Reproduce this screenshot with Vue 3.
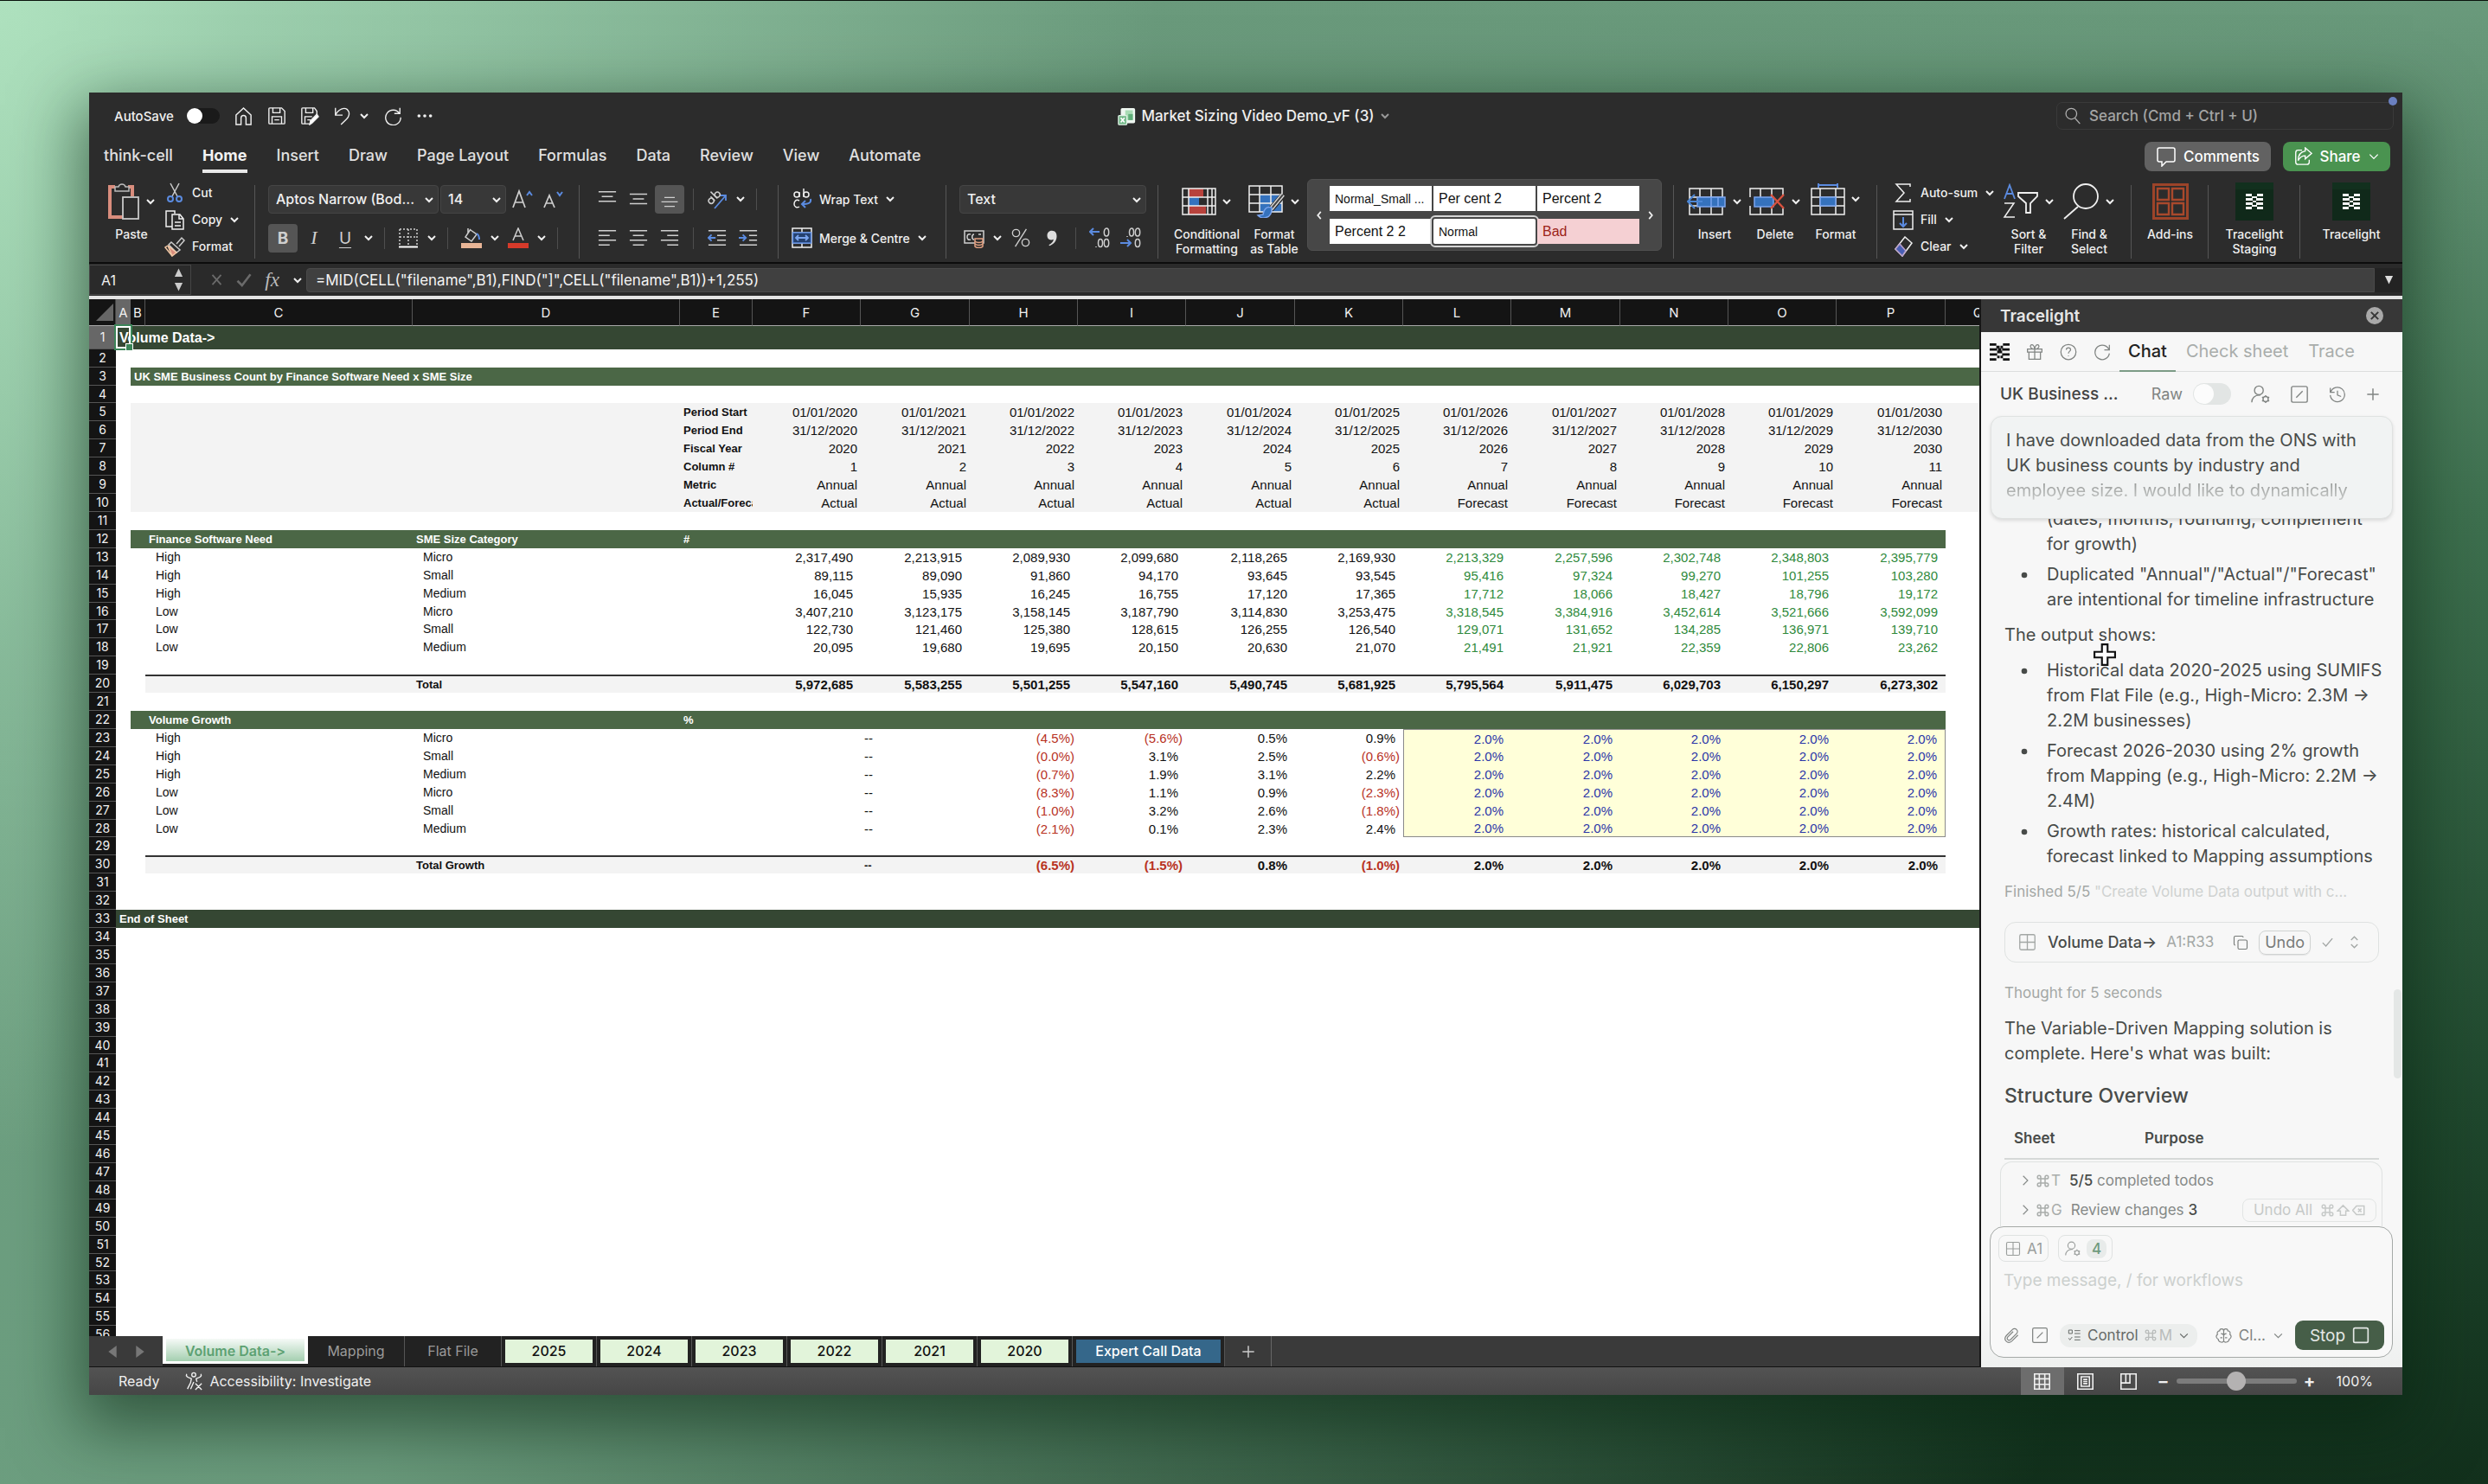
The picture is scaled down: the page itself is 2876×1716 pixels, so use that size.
<script setup>
import { h, ref } from 'vue'

const icons = {
  chev: '<path d="M4 8l8 8 8-8" stroke-width="4"/>',
  chevThin: '<path d="M4 8l8 8 8-8" stroke-width="2.200"/>',
  chevL: '<path d="M15 5l-6 7 6 7" stroke-width="3"/>',
  chevR: '<path d="M9 5l6 7-6 7" stroke-width="3"/>',
  chevRThin: '<path d="M8 3l9 9-9 9" stroke-width="2"/>',
  home: '<path d="M3 10.500L12 2l9 8.500V22h-6v-8a3 3 0 0 0-6 0v8H3z"/>',
  save: '<path d="M4 2h14l4 4v15a1 1 0 0 1-1 1H3a1 1 0 0 1-1-1V3a1 1 0 0 1 1-1zM7 2v6h9V2M6 22v-9h12v9M9 17h6"/>',
  saveEdit: '<path d="M12 22H3a1 1 0 0 1-1-1V3a1 1 0 0 1 1-1h15l3 4v4M7 2v6h9V2M6 22v-9h9M9 17h4"/><path d="M12 23l1-5 8-8 2 3-8 8z" fill="#fff"/>',
  undo: '<path d="M3 2v9h9M3 11C7 3 14 1 18 4c4 4 2 9-1 12l-7 7"/>',
  redo: '<path d="M21 2v7h-7M20.500 9A9.500 9.500 0 1 0 22 14"/>',
  dots: '<g fill="currentColor" stroke="none"><circle cx="4" cy="12" r="2.200"/><circle cx="12" cy="12" r="2.200"/><circle cx="20" cy="12" r="2.200"/></g>',
  excel: '<rect x="4" y="1" width="19" height="20" rx="2" fill="#eef6f0" stroke="none"/><rect x="10" y="4" width="10" height="13" fill="#a9dcb5" stroke="none"/><rect x="14" y="9" width="6" height="8" fill="#5fae78" stroke="none"/><rect x="1" y="11" width="11" height="12" rx="1" fill="#6fb786" stroke="#dff0e4"/><path d="M4 14l5 6M9 14l-5 6" stroke="#fff" stroke-width="2"/>',
  search: '<circle cx="10" cy="9" r="7.500"/><path d="M15 15l7 8"/>',
  bubble: '<path d="M4 2h16a2 2 0 0 1 2 2v12a2 2 0 0 1-2 2h-8l-5 5v-5H4a2 2 0 0 1-2-2V4a2 2 0 0 1 2-2z"/>',
  share: '<path d="M11 4H6a3 3 0 0 0-3 3v12a3 3 0 0 0 3 3h11a3 3 0 0 0 3-3v-3"/><path d="M15 1l8 7-8 7v-4c-5 0-7 2-9 6 0-7 3-11 9-12z"/>',
  paste: '<path d="M9 4H3v35h16" stroke="#d98d7d" stroke-width="4"/><path d="M24 4h5v11" stroke="#d98d7d" stroke-width="4"/><path d="M9 9V4h4c1-4 7-4 8 0h4v5z" stroke="#bbb" fill="#2c2c2c" stroke-width="1.500"/><rect x="18" y="16" width="18" height="25" stroke="#c8c8c8" fill="#2c2c2c" stroke-width="1.800"/>',
  cut: '<path d="M7 1l8 15M17 1L9 16" stroke="#ccc"/><circle cx="7" cy="19" r="3" stroke="#5b8be0" stroke-width="2"/><circle cx="17" cy="19" r="3" stroke="#5b8be0" stroke-width="2"/>',
  copy: '<path d="M9 20H2V2h10v3M9 6h9l4 5v12H9zM17 6v5h5M12 15h7M12 19h7"/>',
  brush: '<path d="M14 9l6-7 3 3-6 7" stroke="#ccc"/><path d="M8 7l10 9-4 3L5 10z" stroke="#ccc"/><path d="M4 11l10 8-5 4z" fill="#d98d7d" stroke="#f1c7a5"/><path d="M4 11l-3 2 8 10" stroke="#f1c7a5"/>',
  bigA: '<path d="M1 22L8 3l7 19M4 16h8" stroke-width="1.700"/><path d="M17 8l3-4 3 4" stroke="#5b8be0" stroke-width="2"/>',
  smallA: '<path d="M1 22L7 8l6 14M3 17h8" stroke-width="1.700"/><path d="M16 4l3 4 3-4" stroke="#5b8be0" stroke-width="2"/>',
  border: '<path d="M2 2h20M2 2v18M22 2v18M12 2v18M2 11h20" stroke-dasharray="2 2"/><path d="M1 22.500h22" stroke-width="2" stroke="#fff"/>',
  fill: '<path d="M11 2L5 11l7 5 6-8-7-5M8 1v6"/><path d="M18 7c3 2 3 5 3 7" stroke="#5b8be0" stroke-width="2"/><rect x="0" y="18" width="24" height="6" fill="#e8b596" stroke="none"/>',
  fontColor: '<path d="M6 15L12 1l6 14M8 10h8"/><rect x="0" y="18" width="24" height="6" fill="#d63a2a" stroke="none"/>',
  alTop: '<path d="M1 3h22M5 9h14M1 15h22"/>',
  alMid: '<path d="M1 6h22M5 12h14M1 18h22"/>',
  alBot: '<path d="M5 12h14M1 18h22M5 24h14"/>',
  alL: '<path d="M1 3h22M1 9h14M1 15h22M1 21h14"/>',
  alC: '<path d="M1 3h22M5 9h14M1 15h22M5 21h14"/>',
  alR: '<path d="M1 3h22M9 9h14M1 15h22M9 21h14"/>',
  orient: '<g transform="rotate(-45 8 10)"><circle cx="3" cy="11" r="3"/><path d="M6 7v7M10 3v11"/><circle cx="13" cy="11" r="3"/></g><path d="M9 23L22 8M16 8h6v6" stroke="#5b8be0" stroke-width="1.800"/>',
  outdent: '<path d="M1 3h22M12 9h11M12 15h11M1 21h22"/><path d="M10 12H1M5 8l-4 4 4 4" stroke="#5b8be0" stroke-width="2"/>',
  indent: '<path d="M1 3h22M13 9h10M13 15h10M1 21h22"/><path d="M0 12h9M5 8l4 4-4 4" stroke="#5b8be0" stroke-width="2"/>',
  wrap: '<circle cx="6" cy="7" r="3"/><path d="M9 4v6M14 0v10"/><circle cx="17" cy="7" r="3"/><path d="M9 14c-4-2-6 1-6 4s3 5 6 3"/><path d="M22 12c1 5-3 6-10 6M16 14l-4 4 4 4" stroke="#5b8be0" stroke-width="2"/>',
  merge: '<path d="M1 1h22v22H1zM12 1v5M12 18v5M1 6h22M1 18h22"/><rect x="1.500" y="6" width="21" height="12" fill="#24406e" stroke="#5b8be0"/><path d="M5 12h14M8 9l-3 3 3 3M16 9l3 3-3 3" stroke="#7aa4ee" stroke-width="1.800"/>',
  money: '<path d="M1 4h22v14H1z"/><path d="M8 8c-3-1-4 1-4 3s1 4 4 3M12 8c-3 0-3 6 0 6M17 8h3"/><path d="M13 13h9v9c-2 2-7 2-9 0z" fill="#2c2c2c" stroke="#e2a183"/><path d="M13 16c2 2 7 2 9 0M13 19c2 2 7 2 9 0" stroke="#e2a183"/>',
  percent: '<circle cx="6" cy="6" r="4.500"/><circle cx="18" cy="18" r="4.500"/><path d="M19 1L5 23"/>',
  comma: '<path d="M12 3c4 0 6 3 6 7 0 6-4 10-9 12l-1-1c4-2 6-5 6-7-5 2-8-1-8-5 0-3 2-6 6-6z" fill="#ddd" stroke="none"/>',
  decInc: '<path d="M12 5H1M5 1L1 5l4 4" stroke="#5b8be0" stroke-width="2"/><ellipse cx="20" cy="5.500" rx="2.700" ry="4.500"/><ellipse cx="13" cy="18" rx="2.500" ry="4.500"/><ellipse cx="20" cy="18" rx="2.700" ry="4.500"/><path d="M8 22v1"/>',
  decDec: '<ellipse cx="13" cy="5.500" rx="2.500" ry="4.500"/><ellipse cx="20" cy="5.500" rx="2.700" ry="4.500"/><path d="M8 10v1"/><path d="M0 18h12M8 14l4 4-4 4" stroke="#5b8be0" stroke-width="2"/><ellipse cx="20" cy="18" rx="2.700" ry="4.500"/>',
  cond: '<rect x="8" y="1" width="17" height="10" fill="#b8423c" stroke="none"/><rect x="8" y="11" width="12" height="10" fill="#3572bd" stroke="none"/><rect x="8" y="21" width="20" height="10" fill="#b8423c" stroke="none"/><path d="M1 1h38v30H1zM1 11h38M1 21h38M8 1v30M30 1v30M35 1v30"/>',
  fmtTable: '<rect x="13" y="11" width="26" height="20" fill="#3572bd" stroke="none"/><path d="M1 1h38v30H1zM1 11h38M1 21h38M13 1v30M26 1v30"/><path d="M40 12L26 28" stroke="#2c2c2c" stroke-width="7"/><path d="M40 11L26 28" stroke="#ddd" stroke-width="5"/><path d="M40 11L26 28" stroke="#444" stroke-width="2"/><path d="M27 26c-6-2-9 2-10 8l-6 1c5 5 17 4 16-9z" fill="#3572bd" stroke="#7aa4ee"/>',
  insCells: '<path d="M3 1h38v30H3zM15 1v30M28 1v30M3 11h38M3 21h38"/><rect x="12" y="11" width="32" height="11" fill="#3572bd" stroke="#7aa4ee"/><path d="M28 11v11M36 11v11" stroke="#7aa4ee"/><path d="M18 16H1M9 8l-8 8 8 8" stroke="#4c86d4" stroke-width="2"/>',
  delCells: '<path d="M1 11V1h38v8M39 24v7H1V21M13 1v30M26 1v30"/><rect x="6" y="11" width="22" height="11" fill="#3572bd" stroke="#7aa4ee"/><path d="M25 8l15 16M40 8L25 24" stroke="#d9523f" stroke-width="2.400"/>',
  fmtCells: '<path d="M1 7h38v30H1zM1 17h38M1 27h38M11 7v30M29 7v30"/><rect x="11" y="17" width="18" height="10" fill="#3572bd" stroke="#7aa4ee"/><path d="M9 3h22M9 1v5M31 1v5" stroke="#5b8be0" stroke-width="2"/>',
  sigma: '<path d="M20 5V2H4l9 10-9 10h16v-3"/>',
  fillDown: '<path d="M1 2h22v21H1zM1 6h22"/><path d="M12 9v11M8 16l4 4 4-4" stroke="#5b8be0" stroke-width="2"/>',
  clear: '<path d="M3 15L14 1l8 7L11 23z"/><path d="M3 15l8 8 4-6-7-8z" fill="#4a5fb5" stroke="#b9a0c8"/>',
  sort: '<path d="M2 18L8 2l6 16M4 12h8" stroke="#5b8be0" stroke-width="1.800"/><path d="M2 23h11L2 39h12"/><path d="M18 11h22v4l-8 8v11h-5V23l-9-8z" stroke-width="1.800"/>',
  find: '<circle cx="26" cy="15" r="14" stroke-width="1.800"/><path d="M17 27L1 41" stroke-width="1.800"/>',
  addins: '<rect x="1.500" y="1.500" width="39" height="39" stroke="#9c4429" stroke-width="3"/><path d="M6 6h13v13H6zM23 6h13v13H23zM6 23h13v13H6zM23 23h13v13H23z" stroke="#a9492c" stroke-width="2.400"/>',
  tl: '<rect width="44" height="44" fill="#12301e" stroke="none"/><rect y="8" width="44" height="36" fill="#10291a" stroke="none"/><g fill="#f4f4f4" stroke="none"><path d="M12 13h7v3h-7zM25 13h7v3h-7zM12 18h8v3h-8zM24 18h8v3h-8zM12 23h8v3h-8zM24 23h8v3h-8zM12 28h7v3h-7zM25 28h7v3h-7zM19 16h3v2h-3zM22 16h3v2h-3zM20 21h4v2h-4zM19 26h6v2h-6z"/></g>',
  logo: '<g fill="#111" stroke="none"><path d="M0 2h8v3H0zM16 2h8v3h-8zM8 5h4v3H8zM13 5h3v3h-3zM0 8h9v3H0zM15 8h9v3h-9zM10 8h4v3h-4zM9 11h6v3H9zM0 14h9v3H0zM15 14h9v3h-9zM9 17h3v3H9zM13 17h3v3h-3zM0 20h8v3H0zM16 20h8v3h-8z"/></g>',
  cross: '<path d="M4 3l16 18M20 3L4 21" stroke-width="3"/>',
  tick: '<path d="M2 13l7 7L22 3" stroke-width="3.500"/>',
  triUp: '<path d="M12 1l10 21H2z" fill="currentColor" stroke="none"/>',
  triDown: '<path d="M12 23L2 2h20z" fill="currentColor" stroke="none"/>',
  triL: '<path d="M4 12L20 0v24z" fill="currentColor" stroke="none"/>',
  triR: '<path d="M20 12L4 0v24z" fill="currentColor" stroke="none"/>',
  corner: '<path d="M24 0v24H0z" fill="#666" stroke="none"/>',
  gift: '<path d="M2 8h20v4H2zM4 12v10h16V12M12 8v14M12 8C5 8 5 2 8 2s4 6 4 6 1-6 4-6 3 6-4 6z"/>',
  help: '<circle cx="12" cy="12" r="10.500"/><path d="M9 9c0-4 6-4 6 0 0 2-3 2-3 5M12 17v1"/>',
  refresh: '<path d="M22 2v7h-7M21.500 9A10 10 0 1 0 22 14"/>',
  userCog: '<circle cx="10" cy="7" r="5.500"/><path d="M1 22c0-5 4-9 9-9h2"/><circle cx="18.500" cy="18" r="3.300"/><path d="M18.500 13v2M18.500 21v2M14 15.500l2 1M21 19.500l2 1M14 20.500l2-1M21 16.500l2-1" />',
  slashBox: '<rect x="2" y="2" width="20" height="20" rx="2"/><path d="M8 16l8-8"/>',
  history: '<path d="M2 3v6h6M2.500 9A10 10 0 1 1 2 13M12 7v6l5 2"/>',
  plus: '<path d="M12 2v20M2 12h20"/>',
  closeDot: '<circle cx="12" cy="12" r="12" fill="#a9a9a9" stroke="none"/><path d="M7 7l10 10M17 7L7 17" stroke="#373737" stroke-width="2.400"/>',
  grid4: '<rect x="2" y="2" width="20" height="20" rx="2"/><path d="M12 2v20M2 12h20"/>',
  dup: '<rect x="8" y="8" width="14" height="14" rx="2"/><path d="M4 16a2 2 0 0 1-2-2V4a2 2 0 0 1 2-2h10a2 2 0 0 1 2 2"/>',
  check: '<path d="M3 13l6 6L21 5"/>',
  updown: '<path d="M6 8l6-6 6 6M6 16l6 6 6-6"/>',
  clip: '<path d="M21 11l-9 9c-6 5-13-2-8-8l9-9c4-4 10 2 6 6l-9 9c-3 2-6-1-4-4l8-8"/>',
  tasks: '<path d="M2 3h6v6H2zM2 17l2 3 4-5M12 4h10M12 9h10M12 15h10M12 20h10"/>',
  brain: '<path d="M12 3v18M12 5c0-4-6-4-6 0-3 0-4 3-3 5-3 2-2 6 1 7 0 4 6 6 8 3M12 5c0-4 6-4 6 0 3 0 4 3 3 5 3 2 2 6-1 7 0 4-6 6-8 3M8 9c2 0 4 1 4 3M16 9c-2 0-4 1-4 3M7 15h3M17 15h-3"/>',
  square: '<rect x="2" y="2" width="20" height="20" rx="2" stroke-width="2"/>',
  cmd: '<path d="M8 8h8v8H8zM8 8H5a3 3 0 1 1 3-3zM16 8h3a3 3 0 1 0-3-3zM8 16H5a3 3 0 1 0 3 3zM16 16h3a3 3 0 1 1-3 3z" stroke-width="2.400"/>',
  shift: '<path d="M12 3L2 13h5v8h10v-8h5z" stroke-width="2.400"/>',
  back: '<path d="M8 4h14v16H8l-7-8zM11 9l6 6M17 9l-6 6" stroke-width="2.400"/>',
  access: '<circle cx="12" cy="4" r="2.500"/><path d="M3 3c-2 4 4 5 6 6l-1 5-4 8M21 3c2 4-4 5-6 6l1 4M12 13l-4 9M14 15l8 8M22 15l-8 8"/>',
  vNormal: '<path d="M1 1h22v22H1zM8 1v22M16 1v22M1 8h22M1 16h22" stroke-width="2"/>',
  vPage: '<path d="M1 1h22v22H1zM6 5h12v14H6zM9 9h6M9 12h6M9 15h6" stroke-width="2"/>',
  vBreak: '<path d="M1 1h22v22H1zM1 14h13V1M8 1v13" stroke-width="2"/>',
  bullet: '<circle cx="12" cy="12" r="10" fill="currentColor" stroke="none"/>',
  pointer: '<path d="M9 1h6v8h8v6h-8v8H9v-8H1V9h8z" fill="#fff" stroke="#111" stroke-width="2"/>'
}
const Ic = (p) => h('svg', {
  viewBox: `0 0 ${p.vw || 24} ${p.vh || 24}`, width: p.s || p.vw || 24, height: p.t || p.s || p.vh || 24,
  fill: 'none', stroke: 'currentColor', 'stroke-width': 1.5, 'aria-hidden': 'true', innerHTML: icons[p.n]
})

const menus = ['think-cell', 'Home', 'Insert', 'Draw', 'Page Layout', 'Formulas', 'Data', 'Review', 'View', 'Automate']
const styles = [['Normal_Small ...', 'sm'], ['Per cent 2', ''], ['Percent 2', ''], ['Percent 2 2', ''], ['Normal', 'sm on'], ['Bad', 'bad']]

const letters = 'ABCDEFGHIJKLMNOPQ'.split('')
const widths = [17, 17, 309, 309, 84, 125, 126, 125, 125, 126, 125, 125, 126, 125, 125, 126, 76]
const years = Array.from({ length: 11 }, (_, i) => 2020 + i)
const meta = {
  5: ['Period Start', years.map(y => `01/01/${y}`)],
  6: ['Period End', years.map(y => `31/12/${y}`)],
  7: ['Fiscal Year', years],
  8: ['Column #', years.map((_, i) => i + 1)],
  9: ['Metric', years.map(() => 'Annual')],
  10: ['Actual/Forecast', years.map((_, i) => (i < 6 ? 'Actual' : 'Forecast'))]
}
const kinds = [['High', 'Micro'], ['High', 'Small'], ['High', 'Medium'], ['Low', 'Micro'], ['Low', 'Small'], ['Low', 'Medium']]
const volume = [
  '2,317,490 2,213,915 2,089,930 2,099,680 2,118,265 2,169,930 2,213,329 2,257,596 2,302,748 2,348,803 2,395,779',
  '89,115 89,090 91,860 94,170 93,645 93,545 95,416 97,324 99,270 101,255 103,280',
  '16,045 15,935 16,245 16,755 17,120 17,365 17,712 18,066 18,427 18,796 19,172',
  '3,407,210 3,123,175 3,158,145 3,187,790 3,114,830 3,253,475 3,318,545 3,384,916 3,452,614 3,521,666 3,592,099',
  '122,730 121,460 125,380 128,615 126,255 126,540 129,071 131,652 134,285 136,971 139,710',
  '20,095 19,680 19,695 20,150 20,630 21,070 21,491 21,921 22,359 22,806 23,262'
].map(s => s.split(' '))
const volumeTotal = '5,972,685 5,583,255 5,501,255 5,547,160 5,490,745 5,681,925 5,795,564 5,911,475 6,029,703 6,150,297 6,273,302'.split(' ')
const growth = [
  '(4.5%) (5.6%) 0.5% 0.9%', '(0.0%) 3.1% 2.5% (0.6%)', '(0.7%) 1.9% 3.1% 2.2%',
  '(8.3%) 1.1% 0.9% (2.3%)', '(1.0%) 3.2% 2.6% (1.8%)', '(2.1%) 0.1% 2.3% 2.4%'
].map(s => ['', '--', ...s.split(' '), '2.0%', '2.0%', '2.0%', '2.0%', '2.0%'])
const growthTotal = ['', '--', '(6.5%)', '(1.5%)', '0.8%', '(1.0%)', '2.0%', '2.0%', '2.0%', '2.0%', '2.0%']

const pct = (v) => (v === '--' ? 'dash' : v[0] === '(' ? 'num neg' : 'num pct')
function build(n) {
  const c = (t, k = '', span = 1) => ({ t, k, span })
  if (n === 1) return { n, k: 'dark first', cells: [c('Volume Data->', 'title', 17)] }
  if (n === 33) return { n, k: 'dark', cells: [c('End of Sheet', 'b', 17)] }
  if (n === 3) return { n, k: '', cells: [c(''), c('UK SME Business Count by Finance Software Need x SME Size', 'mid b', 16)] }
  if (meta[n]) return { n, k: '', cells: [c(''), c('', 'gray', 3), c(meta[n][0], 'gray b clip'), ...meta[n][1].map(v => c(v, 'gray num date')), c('', 'gray')] }
  if (n === 12) return { n, k: '', cells: [c(''), c('', 'mid'), c('Finance Software Need', 'mid b'), c('SME Size Category', 'mid b'), c('#', 'mid b', 12), c('')] }
  if (n === 22) return { n, k: '', cells: [c(''), c('', 'mid'), c('Volume Growth', 'mid b', 2), c('%', 'mid b', 12), c('')] }
  if (n >= 13 && n <= 18) {
    const i = n - 13
    return { n, k: '', cells: [c('', '', 2), c(kinds[i][0], 'ind'), c(kinds[i][1], 'ind'), c(''), ...volume[i].map((v, j) => c(v, j > 5 ? 'num green' : 'num')), c('')] }
  }
  if (n >= 23 && n <= 28) {
    const i = n - 23
    return { n, k: '', cells: [c('', '', 2), c(kinds[i][0], 'ind'), c(kinds[i][1], 'ind'), c(''),
      ...growth[i].map((v, j) => c(v, pct(v || '-') + (j > 5 ? ' assume' : '') + (j === 6 ? ' aL' : '') + (j === 10 ? ' aR' : '') + (j > 5 && i === 0 ? ' aT' : '') + (j > 5 && i === 5 ? ' aB' : ''))), c('')] }
  }
  if (n === 20) return { n, k: '', cells: [c('', '', 2), c('', 'total'), c('Total', 'total b', 2), ...volumeTotal.map(v => c(v, 'total num b')), c('')] }
  if (n === 30) return { n, k: '', cells: [c('', '', 2), c('', 'total'), c('Total Growth', 'total b', 2), ...growthTotal.map(v => c(v, 'total b ' + pct(v || '-'))), c('')] }
  return { n, k: '', cells: [c('', '', 17)] }
}
const rows = Array.from({ length: 56 }, (_, i) => build(i + 1))

const sheets = [['Volume Data->', 'active'], ['Mapping', 'plain'], ['Flat File', 'plain'], ['2025', 'year'], ['2024', 'year'], ['2023', 'year'], ['2022', 'year'], ['2021', 'year'], ['2020', 'year'], ['Expert Call Data', 'expert']]
const formula = ref('=MID(CELL("filename",B1),FIND("]",CELL("filename",B1))+1,255)')
const zoom = ref(50)
</script>

<template>
  <div class="desktop">
    <main class="window">
      <header class="titlebar">
        <div class="quick">
          <label class="autosave">AutoSave <input type="checkbox" class="switch"></label>
          <button aria-label="Home"><Ic n="home" :s="23" /></button>
          <button aria-label="Save"><Ic n="save" :s="22" /></button>
          <button aria-label="Save as"><Ic n="saveEdit" :s="22" /></button>
          <button aria-label="Undo" class="undo"><Ic n="undo" :s="22" /><Ic n="chev" :s="12" /></button>
          <button aria-label="Redo"><Ic n="redo" :s="22" /></button>
          <button aria-label="More"><Ic n="dots" :s="20" /></button>
        </div>
        <h1 class="doc"><Ic n="excel" :s="21" /><span>Market Sizing Video Demo_vF (3)</span><Ic n="chev" :s="12" class="dim" /></h1>
        <label class="search"><Ic n="search" :s="20" /><input type="text" placeholder="Search (Cmd + Ctrl + U)" aria-label="Search"><i class="notice"></i></label>
      </header>

      <nav class="menubar">
        <a v-for="m in menus" :key="m" href="#" :class="{ current: m === 'Home' }">{{ m }}</a>
        <span class="grow"></span>
        <button class="comments"><Ic n="bubble" :s="24" />Comments</button>
        <button class="share"><Ic n="share" :s="22" />Share<Ic n="chevThin" :s="14" /></button>
      </nav>

      <section class="ribbon">
        <div class="group clipboard">
          <button class="big paste"><span class="pic"><Ic n="paste" :vw="38" :vh="42" /><Ic n="chev" :s="12" /></span>Paste</button>
          <div class="list">
            <button><Ic n="cut" :s="24" />Cut</button>
            <button><Ic n="copy" :s="24" />Copy<Ic n="chev" :s="12" /></button>
            <button><Ic n="brush" :s="24" />Format</button>
          </div>
        </div>
        <div class="group font">
          <div class="rows">
            <div class="line">
              <span class="drop wide"><select aria-label="Font"><option>Aptos Narrow (Bod...</option></select><Ic n="chev" :s="12" /></span>
              <span class="drop size"><select aria-label="Font size"><option>14</option></select><Ic n="chev" :s="12" /></span>
              <button class="tool" aria-label="Grow font"><Ic n="bigA" :s="24" /></button>
              <button class="tool" aria-label="Shrink font"><Ic n="smallA" :s="24" /></button>
            </div>
            <div class="line">
              <button class="tool on bold">B</button>
              <button class="tool italic">I</button>
              <button class="tool under">U</button>
              <button class="more" aria-label="Underline options"><Ic n="chev" :s="12" /></button>
              <i class="sep"></i>
              <button class="tool" aria-label="Borders"><Ic n="border" :s="24" /></button>
              <button class="more" aria-label="Border options"><Ic n="chev" :s="12" /></button>
              <i class="sep"></i>
              <button class="tool" aria-label="Fill colour"><Ic n="fill" :s="24" /></button>
              <button class="more" aria-label="Fill options"><Ic n="chev" :s="12" /></button>
              <button class="tool" aria-label="Font colour"><Ic n="fontColor" :s="24" /></button>
              <button class="more" aria-label="Font colour options"><Ic n="chev" :s="12" /></button>
              <i class="sep"></i>
            </div>
          </div>
        </div>
        <div class="group align">
          <div class="rows">
            <div class="line">
              <button class="tool" aria-label="Top align"><Ic n="alTop" :s="22" /></button>
              <button class="tool" aria-label="Middle align"><Ic n="alMid" :s="22" /></button>
              <button class="tool on" aria-label="Bottom align"><Ic n="alBot" :vw="24" :vh="28" :s="24" /></button>
              <i class="sep"></i>
              <button class="tool" aria-label="Orientation"><Ic n="orient" :s="24" /></button>
              <button class="more" aria-label="Orientation options"><Ic n="chev" :s="12" /></button>
              <i class="sep"></i>
            </div>
            <div class="line">
              <button class="tool" aria-label="Align left"><Ic n="alL" :s="22" /></button>
              <button class="tool" aria-label="Centre"><Ic n="alC" :s="22" /></button>
              <button class="tool" aria-label="Align right"><Ic n="alR" :s="22" /></button>
              <i class="sep"></i>
              <button class="tool" aria-label="Decrease indent"><Ic n="outdent" :s="22" /></button>
              <button class="tool" aria-label="Increase indent"><Ic n="indent" :s="22" /></button>
            </div>
          </div>
        </div>
        <div class="group wrapping">
          <div class="rows">
            <button class="text"><Ic n="wrap" :s="24" />Wrap Text<Ic n="chev" :s="12" /></button>
            <button class="text"><Ic n="merge" :s="24" />Merge &amp; Centre<Ic n="chev" :s="12" /></button>
          </div>
        </div>
        <div class="group number">
          <div class="rows">
            <div class="line"><span class="drop full"><select aria-label="Number format"><option>Text</option></select><Ic n="chev" :s="12" /></span></div>
            <div class="line">
              <button class="tool" aria-label="Currency"><Ic n="money" :s="24" /></button>
              <button class="more" aria-label="Currency options"><Ic n="chev" :s="12" /></button>
              <button class="tool" aria-label="Per cent"><Ic n="percent" :s="22" /></button>
              <button class="tool" aria-label="Comma"><Ic n="comma" :s="22" /></button>
              <i class="sep"></i>
              <button class="tool" aria-label="Increase decimal"><Ic n="decInc" :s="24" /></button>
              <button class="tool" aria-label="Decrease decimal"><Ic n="decDec" :s="24" /></button>
            </div>
          </div>
        </div>
        <div class="group looks">
          <button class="big w80"><span class="pic"><Ic n="cond" :vw="40" :vh="32" /><Ic n="chev" :s="12" /></span>Conditional<br>Formatting</button>
          <button class="big w76"><span class="pic"><Ic n="fmtTable" :vw="42" :vh="38" /><Ic n="chev" :s="12" /></span>Format<br>as Table</button>
          <div class="gallery">
            <button aria-label="Previous styles"><Ic n="chevL" :s="14" /></button>
            <div class="cells"><button v-for="s in styles" :key="s[0]" :class="s[1]">{{ s[0] }}</button></div>
            <button aria-label="Next styles"><Ic n="chevR" :s="14" /></button>
          </div>
        </div>
        <div class="group cellsg">
          <button class="big w70"><span class="pic"><Ic n="insCells" :vw="46" :vh="32" /><Ic n="chev" :s="12" /></span>Insert</button>
          <button class="big w70"><span class="pic"><Ic n="delCells" :vw="42" :vh="32" /><Ic n="chev" :s="12" /></span>Delete</button>
          <button class="big w70"><span class="pic up"><Ic n="fmtCells" :vw="40" :vh="38" /><Ic n="chev" :s="12" /></span>Format</button>
        </div>
        <div class="group editing">
          <div class="list">
            <button><Ic n="sigma" :s="24" />Auto-sum<Ic n="chev" :s="12" /></button>
            <button><Ic n="fillDown" :s="24" />Fill<Ic n="chev" :s="12" /></button>
            <button><Ic n="clear" :s="24" />Clear<Ic n="chev" :s="12" /></button>
          </div>
          <button class="big w70"><span class="pic"><Ic n="sort" :vw="42" :vh="42" /><Ic n="chev" :s="12" /></span>Sort &amp;<br>Filter</button>
          <button class="big w70"><span class="pic"><Ic n="find" :vw="42" :vh="42" /><Ic n="chev" :s="12" /></span>Find &amp;<br>Select</button>
        </div>
        <div class="group solo"><button class="big"><span class="pic"><Ic n="addins" :vw="42" :vh="42" /></span>Add-ins</button></div>
        <div class="group solo"><button class="big"><span class="pic"><Ic n="tl" :vw="44" :vh="44" /></span>Tracelight<br>Staging</button></div>
        <div class="group solo last"><button class="big"><span class="pic"><Ic n="tl" :vw="44" :vh="44" /></span>Tracelight</button></div>
      </section>

      <section class="formulabar">
        <div class="namebox"><input type="text" value="A1" aria-label="Name box"><span class="spin"><Ic n="triUp" :s="11" /><Ic n="triDown" :s="11" /></span></div>
        <div class="fx">
          <button aria-label="Cancel" class="off"><Ic n="cross" :s="15" /></button>
          <button aria-label="Enter" class="off"><Ic n="tick" :s="18" /></button>
          <button class="fn">fx</button>
          <Ic n="chev" :s="12" />
        </div>
        <input v-model="formula" class="formula" type="text" aria-label="Formula">
        <button class="expand" aria-label="Expand"><Ic n="triDown" :s="11" /></button>
      </section>

      <div class="work">
        <div class="left">
          <div class="sheet">
            <table>
              <colgroup><col class="rowno"><col v-for="(w, i) in widths" :key="i" :style="{ width: w + 'px' }"></colgroup>
              <thead><tr><th class="corner"><Ic n="corner" :s="20" /></th><th v-for="l in letters" :key="l" scope="col" :class="{ sel: l === 'A', edge: l !== 'A' }">{{ l }}</th></tr></thead>
              <tbody>
                <tr v-for="r in rows" :key="r.n" :class="r.k">
                  <th scope="row" :class="{ sel: r.n === 1 }">{{ r.n }}</th>
                  <td v-for="(c, i) in r.cells" :key="i" :class="c.k" :colspan="c.span">{{ c.t }}<i v-if="c.k === 'title'" class="cursor"></i></td>
                </tr>
              </tbody>
            </table>
          </div>
          <nav class="tabs">
            <span class="arrows"><button aria-label="Previous sheet"><Ic n="triL" :s="14" /></button><button aria-label="Next sheet"><Ic n="triR" :s="14" /></button></span>
            <span class="strip"><button v-for="s in sheets" :key="s[0]" :class="s[1]"><span>{{ s[0] }}</span></button></span>
            <button class="add" aria-label="New sheet"><Ic n="plus" :s="16" class="heavy" /></button>
          </nav>
        </div>

        <aside class="panel">
          <header class="phead"><h2>Tracelight</h2><button aria-label="Close"><Ic n="closeDot" :s="20" /></button></header>
          <nav class="ptabs">
            <Ic n="logo" :s="23" />
            <button aria-label="Gifts"><Ic n="gift" :s="20" /></button>
            <button aria-label="Help"><Ic n="help" :s="20" /></button>
            <button aria-label="Reload"><Ic n="refresh" :s="20" /></button>
            <a href="#" class="current">Chat</a><a href="#">Check sheet</a><a href="#">Trace</a>
          </nav>
          <div class="ptitle">
            <h3>UK Business ...</h3>
            <label>Raw <input type="checkbox" class="rawswitch"></label>
            <button aria-label="Profiles"><Ic n="userCog" :s="22" /></button>
            <button aria-label="Workflows"><Ic n="slashBox" :s="22" /></button>
            <button aria-label="History"><Ic n="history" :s="20" /></button>
            <button aria-label="New chat"><Ic n="plus" :s="16" class="heavy" /></button>
          </div>
          <div class="prompt">I have downloaded data from the ONS with UK business counts by industry and <span>employee size. I would like to dynamically</span></div>
          <div class="chat">
            <i class="thumb"></i>
            <ul class="first">
              <li class="nodot">(dates, months, rounding, complement for growth)</li>
              <li><Ic n="bullet" :s="8" />Duplicated "Annual"/"Actual"/"Forecast" are intentional for timeline infrastructure</li>
            </ul>
            <p>The output shows:</p>
            <ul>
              <li><Ic n="bullet" :s="8" />Historical data 2020-2025 using SUMIFS from Flat File (e.g., High-Micro: 2.3M → 2.2M businesses)</li>
              <li><Ic n="bullet" :s="8" />Forecast 2026-2030 using 2% growth from Mapping (e.g., High-Micro: 2.2M → 2.4M)</li>
              <li><Ic n="bullet" :s="8" />Growth rates: historical calculated, forecast linked to Mapping assumptions</li>
            </ul>
            <div class="finished">Finished 5/5 <span>"Create Volume Data output with c...</span></div>
            <div class="change">
              <Ic n="grid4" :s="21" class="pale" /><b>Volume Data→</b><span class="range">A1:R33</span>
              <button aria-label="Copy"><Ic n="dup" :s="18" /></button><button class="undoBtn">Undo</button>
              <button aria-label="Accept" class="pale"><Ic n="check" :s="15" class="heavy" /></button><button aria-label="Expand" class="pale"><Ic n="updown" :s="15" class="heavy" /></button>
            </div>
            <div class="thought">Thought for 5 seconds</div>
            <p class="answer">The Variable-Driven Mapping solution is complete. Here's what was built:</p>
            <h3>Structure Overview</h3>
            <table class="overview"><thead><tr><th scope="col">Sheet</th><th scope="col">Purpose</th></tr></thead></table>
            <Ic n="pointer" :s="26" class="pointer" />
          </div>
          <div class="dock">
            <div class="todo">
              <div><Ic n="chevRThin" :s="14" /><span class="key"><Ic n="cmd" :s="15" />T</span><span><b>5/5</b> completed todos</span></div>
              <div><Ic n="chevRThin" :s="14" /><span class="key"><Ic n="cmd" :s="15" />G</span><span>Review changes <b>3</b></span><button class="undoAll">Undo All <span><Ic n="cmd" :s="15" /><Ic n="shift" :s="15" /><Ic n="back" :s="15" /></span></button></div>
            </div>
            <form class="composer" @submit.prevent>
              <div class="chips"><button type="button"><Ic n="grid4" :s="18" />A1</button><button type="button"><Ic n="userCog" :s="18" /><b>4</b></button></div>
              <textarea placeholder="Type message, / for workflows" aria-label="Message" rows="1"></textarea>
              <div class="bar">
                <button type="button" aria-label="Attach"><Ic n="clip" :s="19" /></button>
                <button type="button" aria-label="Workflows"><Ic n="slashBox" :s="20" /></button>
                <button type="button" class="mode"><Ic n="tasks" :s="16" />Control<span><Ic n="cmd" :s="14" />M</span><Ic n="chevThin" :s="13" /></button>
                <button type="button" class="model"><Ic n="brain" :s="19" />Cl...<Ic n="chevThin" :s="13" /></button>
                <button type="submit" class="stop">Stop<Ic n="square" :s="20" /></button>
              </div>
            </form>
          </div>
        </aside>
      </div>

      <footer class="status">
        <span>Ready</span>
        <button class="acc"><Ic n="access" :s="22" />Accessibility: Investigate</button>
        <span class="grow"></span>
        <button class="view on" aria-label="Normal view"><Ic n="vNormal" :s="19" /></button>
        <button class="view" aria-label="Page layout view"><Ic n="vPage" :s="19" /></button>
        <button class="view" aria-label="Page break view"><Ic n="vBreak" :s="19" /></button>
        <button class="step">–</button>
        <input v-model="zoom" type="range" min="0" max="100" aria-label="Zoom">
        <button class="step">+</button>
        <span class="level">100%</span>
      </footer>
    </main>
  </div>
</template>

<style>
body { margin: 0; background: #2b5237; }
</style>

<style scoped>
.desktop {
  height: 100vh; box-sizing: border-box; padding: 106px 99px 103px 103px;
  border-top: 1px solid #0a120c;
  font-family: Inter, "Liberation Sans", sans-serif; color: #f0f0f0;
  background:
    radial-gradient(circle at 0 0, rgba(190, 240, 205, .75), transparent 40%),
    linear-gradient(110deg, #7fb592 0%, #6da081 8%, #6a9a7c 30%, transparent 85%),
    linear-gradient(180deg, #6a9a7c 0%, #3d6f4e 35%, #1f472d 75%, #12301c 100%);
}
.desktop * { box-sizing: border-box; }
button { font: inherit; color: inherit; background: none; border: 0; padding: 0; display: flex; align-items: center; }
input, select, textarea { font: inherit; color: inherit; background: none; border: 0; padding: 0; margin: 0; outline: 0; }
a { color: inherit; text-decoration: none; }
h1, h2, h3, p, ul { margin: 0; padding: 0; font-weight: 400; }
svg { flex: none; display: block; }
.grow { flex: 1; }
.window { height: 100%; display: flex; flex-direction: column; background: #2c2c2c; box-shadow: 0 26px 70px 12px rgba(5, 35, 15, .55); }

.titlebar { height: 54px; flex: none; display: grid; grid-template-columns: 1fr auto 1fr; align-items: center; padding: 0 10px 0 29px; }
.quick { display: flex; align-items: center; gap: 16px; font-size: 15px; font-weight: 500; }
.autosave { display: flex; align-items: center; gap: 15px; }
.switch { appearance: none; width: 38px; height: 18px; border-radius: 9px; background: #1a1a1a; display: block; }
.switch::before { content: ""; display: block; width: 18px; height: 18px; border-radius: 50%; background: #fff; }
.undo { gap: 8px; }
.doc { display: flex; align-items: center; gap: 6px; font-size: 17px; font-weight: 500; }
.dim { color: #999; }
.search { position: relative; justify-self: end; width: 390px; height: 32px; border: 1px solid #3a3a3a; border-radius: 7px; display: flex; align-items: center; gap: 9px; padding-left: 8px; color: #b0b0b0; font-size: 17px; font-weight: 500; }
.search input { flex: 1; }
.search input::placeholder { color: #a4a4a4; }
.notice { position: absolute; right: -5px; top: -7px; width: 10px; height: 10px; border-radius: 50%; background: #6a80c0; }

.menubar { height: 39px; flex: none; display: flex; align-items: center; gap: 34px; padding: 0 14px 0 17px; font-size: 18px; font-weight: 500; color: #e0e0e0; }
.menubar a { height: 39px; line-height: 38px; }
.menubar a.current { font-weight: 700; color: #f2f2f2; border-bottom: 4px solid #e8e8e8; }
.comments, .share { height: 34px; border-radius: 8px; gap: 8px; font-size: 17px; color: #fff; }
.comments { width: 146px; background: #626262; justify-content: center; margin-right: -20px; }
.share { width: 124px; background: #4a9350; justify-content: center; }

.ribbon { height: 105px; flex: none; display: grid; grid-template-columns: 192fr 375fr 230fr 194fr 245fr 596fr 235fr 294fr 89fr 106fr 118fr; padding-top: 2px; font-size: 14px; font-weight: 500; border-bottom: 2px solid #0c0c0c; }
.group { position: relative; display: flex; align-items: center; padding-left: 15px; min-width: 0; white-space: nowrap; }
.group::after { content: ""; position: absolute; right: 0; top: 12px; bottom: 4px; width: 1px; background: #565656; }
.group.last::after { display: none; }
.rows { display: flex; flex-direction: column; gap: 12px; flex: 1; }
.line { display: flex; align-items: center; gap: 2px; height: 33px; }
.tool { width: 34px; height: 33px; justify-content: center; border-radius: 4px; color: #cfcfcf; }
.tool.on { background: #555; }
.more { width: 16px; height: 33px; justify-content: center; }
.sep { width: 1px; height: 25px; background: #4e4e4e; margin: 0 8px; }
.bold { font-size: 19px; font-weight: 700; }
.italic { font: italic 22px "Liberation Serif", serif; }
.under { font-size: 19px; text-decoration: underline; font-weight: 400; text-underline-offset: 4px; }
.drop { position: relative; height: 33px; background: #383838; border: 1px solid #454545; border-radius: 4px; font-size: 16px; }
.drop select { appearance: none; width: 100%; height: 100%; padding-left: 8px; }
.drop svg { position: absolute; right: 4px; top: 10px; pointer-events: none; }
.wide { width: 197px; }
.size { width: 76px; }
.full { width: 216px; }
.clipboard { padding-left: 16px; }
.big { flex-direction: column; align-items: center; justify-content: flex-start; height: 92px; line-height: 17px; display: flex; text-align: center; }
.big .pic { display: flex; align-items: center; justify-content: center; gap: 6px; height: 42px; margin-bottom: 8px; margin-top: 5px; }
.big .pic.up { padding-bottom: 6px; }
.paste { width: 66px; margin-right: 5px; }
.w80 { width: 80px; }
.w76 { width: 76px; }
.w70 { width: 70px; }
.list { padding-top: 2px; }
.list button { height: 31px; gap: 8px; }
.text { height: 33px; gap: 8px; }
.looks { padding-left: 16px; }
.gallery { flex: 1; height: 83px; margin: 0 14px 8px 0; background: #474747; border: 1px solid #505050; border-radius: 6px; display: flex; align-items: center; }
.gallery > button { width: 25px; height: 100%; justify-content: center; }
.cells { flex: 1; display: grid; grid-template-columns: 1fr 1fr 1fr; gap: 9px 2px; font: 16px "Liberation Sans", sans-serif; color: #111; }
.cells button { height: 29px; background: #fff; padding-left: 6px; }
.cells .sm { font-size: 14px; }
.cells .on { outline: 2px solid #d5d5d5; outline-offset: 2px; border-radius: 2px; }
.cells .bad { background: #f5d0d3; color: #9c2318; }
.cellsg { padding-left: 12px; }
.editing { padding-left: 18px; }
.editing .list { width: 122px; }
.solo { padding: 0; justify-content: center; }

.formulabar { height: 37px; flex: none; display: flex; align-items: center; font-size: 17px; background: #2a2a2a; }
.namebox { width: 118px; height: 35px; border: 1px solid #454545; display: flex; align-items: center; padding: 0 0 0 13px; }
.namebox input { width: 84px; font-size: 16px; }
.spin { display: flex; flex-direction: column; gap: 5px; color: #ccc; }
.fx { width: 133px; display: flex; align-items: center; justify-content: space-between; padding: 0 4px 0 22px; }
.off { color: #6a6a6a; }
.fn { font: italic 23px "Liberation Serif", serif; color: #bbb; }
.formula { flex: 1; height: 28px; background: #404040; border: 1px solid #4a4a4a; border-radius: 4px 0 0 4px; padding-left: 10px; color: #f4f4f4; }
.expand { width: 32px; height: 28px; justify-content: center; background: #232323; color: #ddd; }

.work { flex: 1; min-height: 0; display: flex; border-top: 4px solid #e4e4e4; }
.left { flex: 1; min-width: 0; display: flex; flex-direction: column; background: #fff; }
.sheet { flex: 1; min-height: 0; overflow: hidden; font: 15px "Liberation Sans", sans-serif; color: #111; }
.sheet table { table-layout: fixed; width: 2222px; border-collapse: separate; border-spacing: 0; }
.rowno { width: 31px; }
.sheet th { background: #141414; color: #f0f0f0; font-weight: 400; padding: 0; font-family: Inter, sans-serif; }
.sheet thead th { height: 31px; border-bottom: 1px solid #a8a8a8; font-size: 15px; }
.sheet thead th.edge { border-right: 1px solid #555; }
.sheet thead th.corner { padding-left: 8px; border-right: 1px solid #444; }
.sheet tbody th { height: 21px; line-height: 20px; border-bottom: 1px solid #555; font-size: 14px; }
.sheet tbody th.sel, .sheet thead th.sel { background: #676767; }
.sheet td { padding: 0 4px; line-height: 21px; height: 21px; white-space: nowrap; overflow: hidden; }
.sheet tbody tr:nth-child(12n+4) > * { height: 20px; line-height: 19px; }
.sheet tbody tr.first > * { height: 27px; }
.dark td { background: #354733; color: #fff; }
.sheet td.title { font-size: 16px; font-weight: 700; position: relative; overflow: visible; }
.cursor { position: absolute; left: 0; top: 0; width: 17px; height: 26px; border: 2px solid #fff; outline: 2px solid #3b8558; }
.cursor::after { content: ""; position: absolute; right: -5px; bottom: -5px; width: 7px; height: 7px; background: #3b8558; border: 1px solid #fff; }
.sheet td.b { font-weight: 700; font-size: 13px; }
.mid { background: #4b6746; color: #fff; }
.gray, .total { background: #f3f3f3; }
.sheet td.ind { padding-left: 12px; font-size: 14px; }
.sheet td.num { text-align: right; padding: 0 9px 0 0; font-size: 15px; }
.sheet td.date, .sheet td.neg { padding-right: 4px; }
.neg { color: #b8321f; }
.green { color: #2f8a3c; }
.sheet td.total { border-top: 2px solid #333; line-height: 19px; }
.assume { background: #ffffd9; color: #2b35a8; }
.aL { border-left: 1px solid #8a8a8a; }
.aR { border-right: 1px solid #8a8a8a; }
.sheet td.aT { border-top: 1px solid #8a8a8a; line-height: 19px; }
.sheet td.aB { border-bottom: 1px solid #8a8a8a; line-height: 20px; }

.tabs { height: 36px; flex: none; display: flex; background: #3a3a3a; font-size: 16px; border-bottom: 1px solid #111; font-variant-ligatures: none; font-feature-settings: "calt" 0; }
.arrows { width: 85px; display: flex; align-items: center; justify-content: center; gap: 18px; color: #777; }
.strip { display: flex; background: #222; }
.strip button { border-right: 1px solid #555; width: 110px; padding: 4px; }
.strip span { flex: 1; text-align: center; height: 27px; line-height: 27px; white-space: nowrap; }
.strip .active { width: 168px; height: 32px; background: #fff; border: 0; font-weight: 600; color: #5da173; }
.strip .active span { background: linear-gradient(#f6faf7, #a4cfb0); height: 26px; line-height: 28px; }
.strip .plain { width: 112px; color: #9a9a9a; }
.strip .year span { background: #e2f4da; color: #111; font-weight: 500; }
.strip .expert { width: 176px; }
.strip .expert span { background: #35678a; color: #fff; font-weight: 500; }
.add { width: 54px; justify-content: center; border-right: 1px solid #666; color: #ccc; }
.heavy { stroke-width: 2.2; }

.panel { width: 489px; flex: none; border-left: 2px solid #161616; background: #f7f7f7; color: #484b49; display: flex; flex-direction: column; font-size: 20px; }
.phead { height: 38px; flex: none; background: #373737; color: #e6e6e6; display: flex; align-items: center; justify-content: space-between; padding: 0 22px; }
.phead h2 { font-size: 19px; font-weight: 600; }
.ptabs { height: 46px; flex: none; display: flex; align-items: center; gap: 19px; padding-left: 10px; border-bottom: 1px solid #dcdedd; color: #808482; }
.ptabs a { height: 46px; line-height: 45px; font-size: 20px; color: #a9adab; padding: 0 2px; }
.ptabs .current { color: #222; font-weight: 500; border-bottom: 2px solid #7d9c86; padding: 0 10px; margin: 0 -9px; }
.ptitle { height: 51px; flex: none; display: flex; align-items: center; padding: 0 26px 0 22px; color: #808482; }
.ptitle h3 { flex: 1; color: #444; font-weight: 500; font-size: 19px; }
.ptitle label { display: flex; align-items: center; gap: 12px; font-size: 18px; }
.ptitle button { margin-left: 23px; }
.rawswitch { appearance: none; width: 44px; height: 25px; border-radius: 13px; background: #e2e5e4; }
.rawswitch::before { content: ""; display: block; width: 23px; height: 23px; margin: 1px; border-radius: 50%; background: #fcfcfc; }
.prompt { margin: 0 11px; height: 119px; flex: none; background: #f1f3f3; border: 1px solid #dfe2e1; border-radius: 13px; box-shadow: 0 2px 4px rgba(0, 0, 0, .12); padding: 13px 40px 13px 17px; line-height: 29px; z-index: 1; }
.prompt span { background: linear-gradient(#8a8d8b, #d0d2d1); background-clip: text; color: transparent; display: block; white-space: nowrap; }
.chat { position: relative; flex: 1; min-height: 0; overflow: hidden; padding: 0 27px; line-height: 29px; }
.chat ul { list-style: none; display: flex; flex-direction: column; gap: 6px; }
.chat ul.first { margin-top: -14px; }
.chat li { position: relative; padding-left: 49px; margin-right: -10px; }
.chat li svg { position: absolute; left: 19px; top: 11px; }
.chat p { margin: 12px 0; }
.finished, .thought { font-size: 17px; line-height: 26px; color: #a3a7a5; white-space: nowrap; }
.finished { margin: 13px 0 22px; }
.finished span { color: #cfd2d1; }
.change { height: 47px; border: 1px solid #dfe2e1; border-radius: 13px; display: flex; align-items: center; padding: 0 20px 0 15px; font-size: 18px; }
.change b { font-weight: 500; margin-left: 13px; flex: 1; white-space: nowrap; }
.range { font-size: 17px; color: #a3a7a5; margin-right: 22px; }
.change button { color: #777b79; margin-right: 12px; }
.change .undoBtn { border: 1px solid #d0d3d2; border-radius: 8px; height: 28px; padding: 0 6px; box-shadow: 0 1px 1px rgba(0, 0, 0, .08); }
.change .pale, .pale { color: #a3a7a5; }
.change button:last-child { margin: 0 0 0 4px; }
.thought { margin-top: 22px; }
.chat .answer { margin: 14px 0 19px; }
.chat h3 { font-size: 23px; font-weight: 500; line-height: 30px; margin-bottom: 12px; }
.overview { width: 100%; border-collapse: collapse; table-layout: fixed; }
.overview th { height: 46px; padding: 0 0 0 11px; text-align: left; font-size: 17px; font-weight: 600; border-bottom: 2px solid #d6d9d8; }
.overview th:first-child { width: 151px; }
.thumb { position: absolute; right: 1px; top: 544px; width: 9px; height: 103px; border-radius: 5px; background: #e4e7e6; }
.pointer { position: absolute; left: 130px; top: 144px; }
.dock { flex: none; padding: 0 11px 11px 10px; background: linear-gradient(#f7f7f7 70%, #eef0ef); }
.todo { margin: 0 12px; border: 1px solid #dfe2e1; border-bottom: 0; border-radius: 14px 14px 0 0; padding: 4px 6px 2px 21px; font-size: 17px; color: #858987; }
.todo > div { height: 34px; display: flex; align-items: center; gap: 6px; color: #858987; }
.todo b { color: #484b49; font-weight: 500; }
.key { display: flex; align-items: center; gap: 2px; color: #a9adab; margin-right: 4px; }
.undoAll { margin-left: auto; border: 1px solid #e2e5e4; border-radius: 8px; height: 27px; padding: 0 12px; gap: 10px; color: #c6c9c8; }
.undoAll span { display: flex; gap: 3px; }
.composer { border: 1px solid #a5a9a7; border-radius: 16px; background: #f8f8f8; height: 152px; display: flex; flex-direction: column; padding: 9px 9px 8px; }
.chips { display: flex; gap: 11px; font-size: 17px; color: #9a9e9c; }
.chips button { border: 1px solid #dfe2e1; border-radius: 8px; height: 31px; padding: 0 6px 0 7px; gap: 7px; }
.chips b { background: #e8ebea; border-radius: 8px; padding: 1px 6px; font-weight: 500; color: #6f9a7d; }
.composer textarea { flex: 1; resize: none; padding: 8px 6px; line-height: 28px; font-size: 19px; display: block; overflow: hidden; }
.composer textarea::placeholder { color: #ccd0ce; }
.bar { display: flex; align-items: center; color: #808482; font-size: 17px; padding-left: 6px; gap: 13px; }
.mode { background: #eceeed; border-radius: 12px; height: 27px; padding: 0 9px; gap: 7px; color: #666a68; }
.mode span { display: flex; align-items: center; gap: 3px; color: #b9bcbb; }
.model { gap: 8px; flex: 1; justify-content: flex-end; }
.stop { width: 103px; height: 34px; border-radius: 9px; background: #465e48; color: #e4e8e5; justify-content: center; gap: 8px; font-size: 19px; }

.status { height: 32px; flex: none; display: flex; align-items: center; background: linear-gradient(#535353, #464646); font-size: 16px; padding-left: 34px; padding-right: 34px; }
.acc { gap: 7px; margin-left: 29px; }
.view { width: 50px; height: 32px; justify-content: center; }
.view.on { background: #6d6d6d; }
.step { width: 30px; justify-content: center; font-size: 20px; font-weight: 700; }
.status input { appearance: none; width: 139px; height: 6px; border-radius: 3px; background: #7c7c7c; }
.status input::-webkit-slider-thumb { appearance: none; width: 22px; height: 22px; border-radius: 50%; background: #b4b2b2; }
.level { margin-left: 16px; }
</style>
